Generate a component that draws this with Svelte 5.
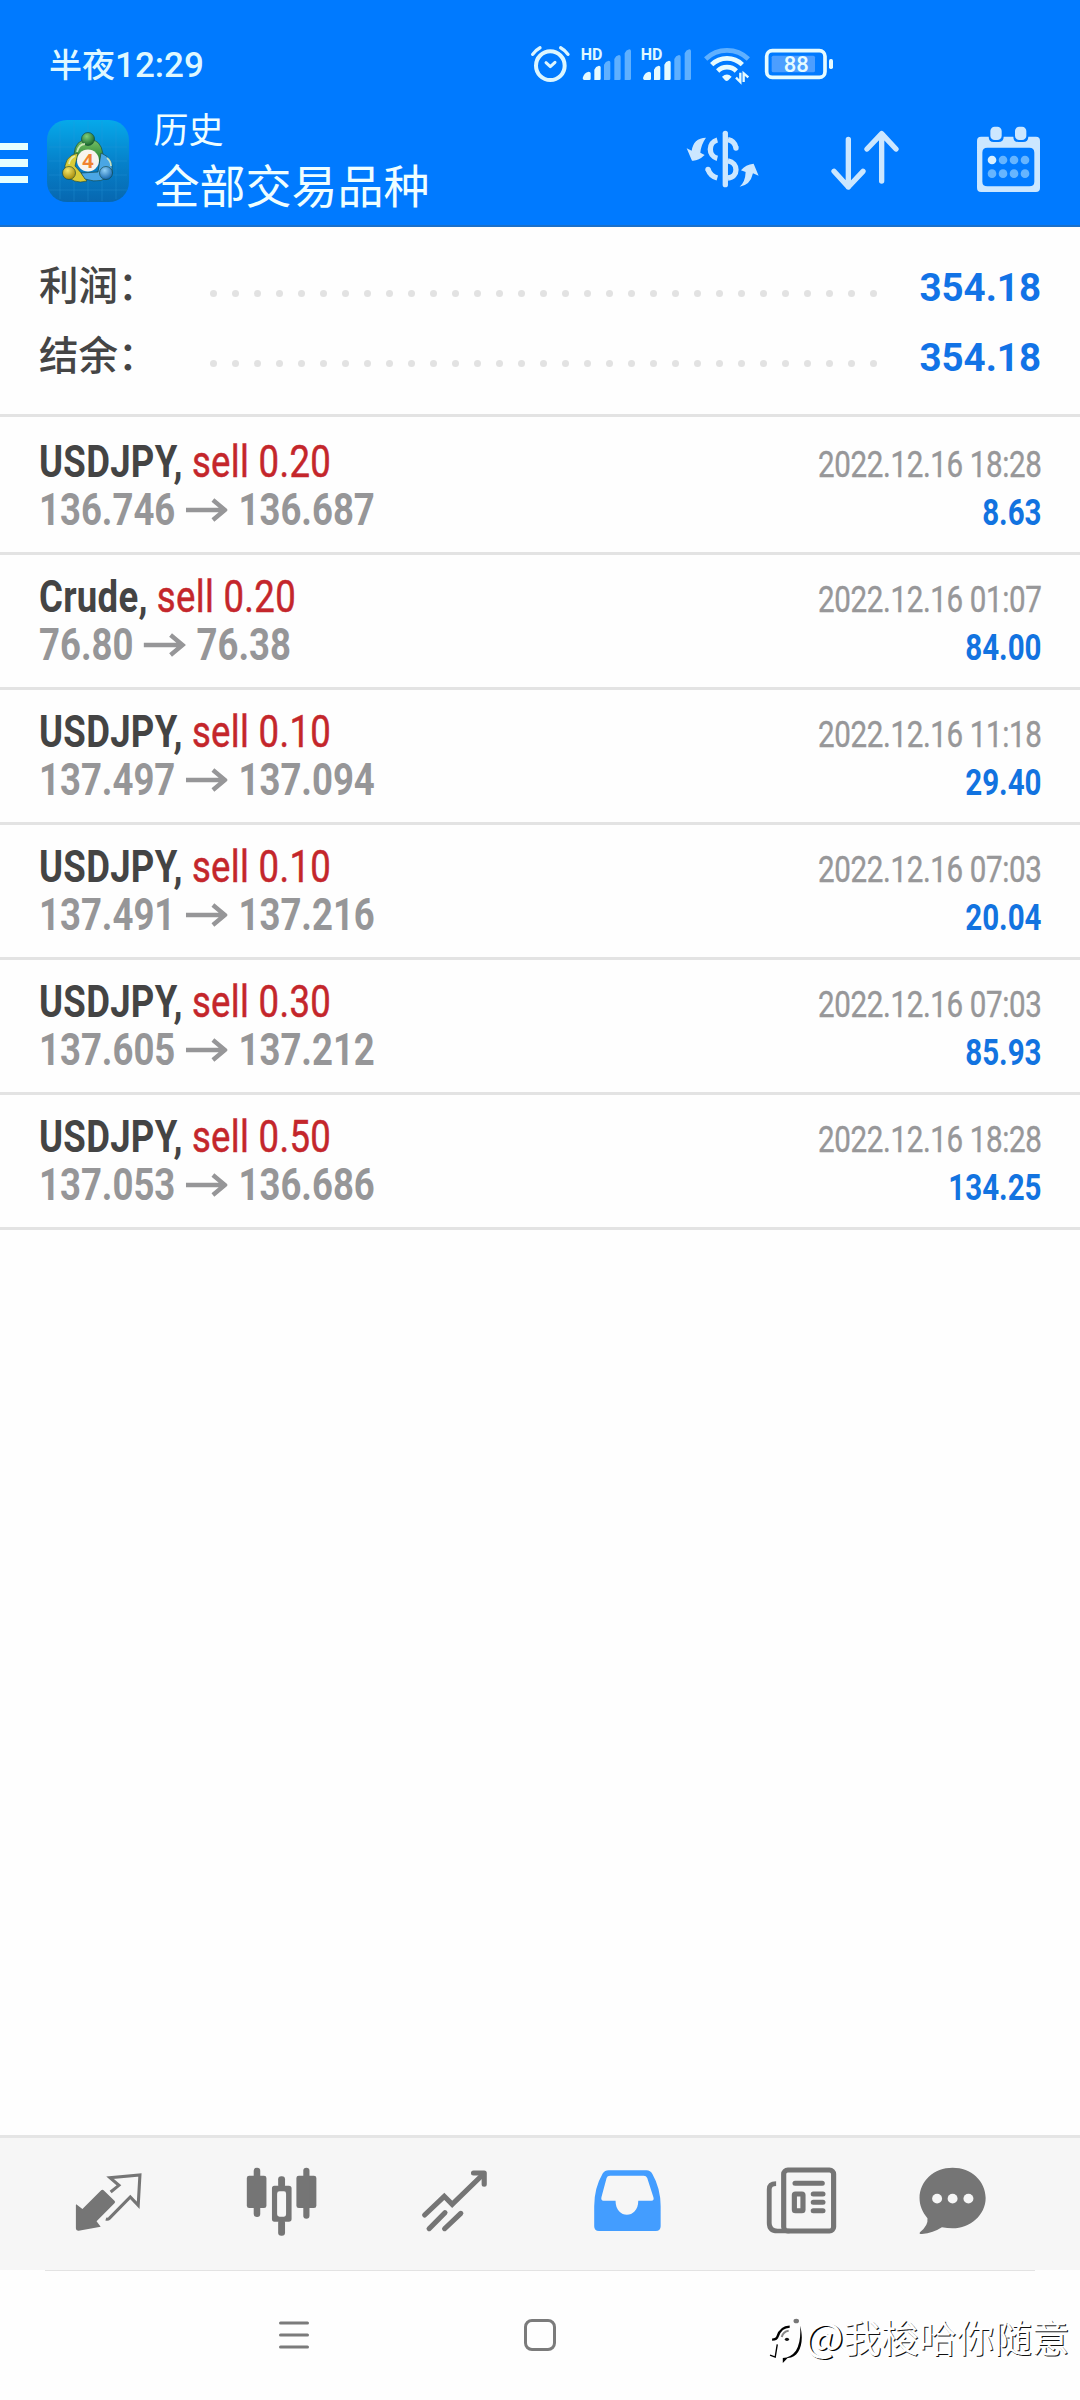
<script>
  const totals = [
    { label: '利润：', value: '354.18' },
    { label: '结余：', value: '354.18' }
  ];
  const dots = Array(31).fill(0);
  const deals = [
    { symbol: 'USDJPY', side: 'sell 0.20', open: '136.746', close: '136.687', time: '2022.12.16 18:28', profit: '8.63' },
    { symbol: 'Crude', side: 'sell 0.20', open: '76.80', close: '76.38', time: '2022.12.16 01:07', profit: '84.00' },
    { symbol: 'USDJPY', side: 'sell 0.10', open: '137.497', close: '137.094', time: '2022.12.16 11:18', profit: '29.40' },
    { symbol: 'USDJPY', side: 'sell 0.10', open: '137.491', close: '137.216', time: '2022.12.16 07:03', profit: '20.04' },
    { symbol: 'USDJPY', side: 'sell 0.30', open: '137.605', close: '137.212', time: '2022.12.16 07:03', profit: '85.93' },
    { symbol: 'USDJPY', side: 'sell 0.50', open: '137.053', close: '136.686', time: '2022.12.16 18:28', profit: '134.25' }
  ];
</script>

<div class="phone">
  <header>
    <div class="status">
      <div class="clock">半夜<span>12:29</span></div>
      <div class="status-icons">
        <svg width="50" height="45" viewBox="90 60 150 135">
          <g fill="none" stroke="#dcf6ff" stroke-linecap="round" stroke-linejoin="round">
            <circle cx="151" cy="137" r="43" stroke-width="12" />
            <path d="M138 128l13 12 14-13" stroke-width="9" />
            <path d="M98 103q9-13 22-20M204 103q-9-13-22-20" stroke-width="10" />
          </g>
        </svg>
        <svg width="60" height="45" viewBox="240 60 180 135">
          <text x="242" y="120" class="hd">HD</text>
          <path d="M252 180q-4-1-4-6 4-16 18-19 6 0 6 5v16q0 4-4 4zM283 180v-31q4-10 14-12 5 0 5 5v34q0 4-4 4z" fill="#e6fbff" />
          <path d="M312 180v-46q4-10 14-12 5 0 5 5v49q0 4-4 4zM343 180v-63q4-10 14-12 5 0 5 5v66q0 4-4 4zM374 180v-80q4-10 14-12 5 0 5 5v83q0 4-4 4z" fill="#5fb0ff" />
        </svg>
        <svg width="60" height="45" viewBox="420 60 180 135">
          <text x="422" y="120" class="hd">HD</text>
          <path d="M433 180q-4-1-4-6 4-16 18-19 6 0 6 5v16q0 4-4 4zM462 180v-31q4-10 14-12 5 0 5 5v34q0 4-4 4zM493 180v-46q4-10 14-12 5 0 5 5v49q0 4-4 4z" fill="#e6fbff" />
          <path d="M523 180v-63q4-10 14-12 5 0 5 5v66q0 4-4 4zM554 180v-80q4-10 14-12 5 0 5 5v83q0 4-4 4z" fill="#5fb0ff" />
        </svg>
        <svg width="60" height="45" viewBox="600 60 180 135">
          <g fill="none" stroke-width="14">
            <path d="M617 117a92 92 0 0 1 128 0" stroke="#5fb0ff" />
            <path d="M635 134a66 66 0 0 1 92 0M653 153a40 40 0 0 1 56 0" stroke="#e6fbff" />
          </g>
          <path d="M666 170q15-13 29 0l-10 11q-5 4-10 0z" fill="#e6fbff" />
          <path d="M721 158v28l-13-13M731 186v-26l14 12" fill="none" stroke="#e6fbff" stroke-width="7" />
        </svg>
        <svg width="80" height="45" viewBox="780 60 240 135">
          <rect x="815" y="107" width="130" height="50" rx="5" fill="#4c9eff" />
          <rect x="800" y="92" width="175" height="80" rx="17" fill="none" stroke="#e6fbff" stroke-width="11" />
          <rect x="987" y="117" width="12" height="30" rx="5" fill="#e6fbff" />
          <text x="851" y="157" class="battery">88</text>
        </svg>
      </div>
    </div>

    <div class="titlebar">
      <div class="menu"><i></i><i></i><i></i></div>
      <svg class="logo" viewBox="0 0 82 82">
        <defs>
          <linearGradient id="sky" x1="0" y1="0" x2="0" y2="1">
            <stop offset="0" stop-color="#06a9ea" /><stop offset=".5" stop-color="#0682cb" /><stop offset="1" stop-color="#0767b0" />
          </linearGradient>
          <linearGradient id="green" x1="0" y1="0" x2="0" y2="1"><stop offset="0" stop-color="#79c267" /><stop offset="1" stop-color="#1d7d2c" /></linearGradient>
          <radialGradient id="head" cx=".4" cy=".3" r=".7"><stop offset="0" stop-color="#7fce7c" /><stop offset="1" stop-color="#17672b" /></radialGradient>
          <radialGradient id="gold" cx=".4" cy=".3" r=".7"><stop offset="0" stop-color="#f4e66b" /><stop offset="1" stop-color="#a58a0a" /></radialGradient>
          <radialGradient id="blue" cx=".4" cy=".3" r=".7"><stop offset="0" stop-color="#8fd0f7" /><stop offset="1" stop-color="#1668b0" /></radialGradient>
        </defs>
        <rect width="82" height="82" rx="20" fill="url(#sky)" />
        <path d="M13 3v76M27 1v80M41 1v80M55 1v80M69 3v76M2 27h78M2 41h78M2 55h78M2 70h78" stroke="#2b9bdc" stroke-width=".7" opacity=".45" />
        <g stroke="#123f38" stroke-width=".6">
          <path d="M27 34q1-14 14-15 13 0 15 15 0 7-4 9l-9-12-12 9q-4-1-4-6z" fill="url(#green)" />
          <path d="M31 33q-15 3-13 20 8 12 22 8l-5-7-7-8z" fill="#d9cb37" />
          <path d="M54 33q13 5 11 20-9 12-27 6l-4-6 17-1z" fill="#4aa6e4" />
          <circle cx="41" cy="19" r="6.5" fill="url(#head)" />
          <circle cx="22" cy="53" r="6.5" fill="url(#gold)" />
          <circle cx="59" cy="53" r="6.5" fill="url(#blue)" />
        </g>
        <path d="M30 32q2-8 8-8M22 44q1-6 6-8M60 38q4 3 4 8" stroke="#e4f5c9" stroke-width="1.8" fill="none" opacity=".8" />
        <circle cx="41" cy="40.5" r="11" fill="#f7f4ee" />
        <text x="41" y="47.5" text-anchor="middle" class="four">4</text>
      </svg>
      <div class="titles">
        <div class="title">历史</div>
        <div class="subtitle">全部交易品种</div>
      </div>
      <div class="actions">
        <svg width="78.3" height="73.3" viewBox="130 70 235 220">
          <path d="M196 114q-19 0-30 11-10 10-13 28l-15-7 16 37q18 2 38-17l-13-7q2-24 17-45zM297 261q17-14 18-44l-14-5q14-18 38-20l15 36-17-7q-8 36-40 40z" fill="#cce7ff" />
          <path d="M254 101v154" stroke="#cce7ff" stroke-width="16" stroke-linecap="round" />
          <path d="M230 121c-28 7-28 48 0 55M202 209q7 20 28 26M262 120q20 4 24 24M262 184c32 5 32 48 0 51" fill="none" stroke="#cce7ff" stroke-width="16" />
          <circle cx="202" cy="209" r="8" fill="#cce7ff" /><circle cx="286" cy="145" r="8" fill="#cce7ff" />
        </svg>
        <svg width="70" height="73.3" viewBox="570 70 210 220">
          <path d="M625 119v143M582 215l43 47 44-47M725 244V102M681 148l44-46 43 46" fill="none" stroke="#cce7ff" stroke-width="16" stroke-linecap="round" stroke-linejoin="round" />
        </svg>
        <svg width="66.7" height="73.3" viewBox="1005 70 200 220">
          <path fill-rule="evenodd" d="M1023 111h165q12 0 12 12v142q0 12-12 12h-165q-12 0-12-12V123q0-12 12-12zM1042 144q-15 0-15 15v87q0 14 15 14h126q15 0 15-14v-87q0-15-15-15z" fill="#cce7ff" />
          <path d="M1046 104h45v7q0 16-16 16h-14q-15 0-15-16zM1120 104h45v7q0 16-16 16h-14q-15 0-15-16z" fill="#007aff" />
          <rect x="1051" y="81" width="34" height="40" rx="13" fill="#cce7ff" />
          <rect x="1125" y="81" width="34" height="40" rx="13" fill="#cce7ff" />
          <g fill="#66b5ff">
            <circle cx="1056" cy="181" r="13" fill="#d9f0ff" /><circle cx="1089" cy="181" r="13" /><circle cx="1122" cy="181" r="13" /><circle cx="1155" cy="181" r="13" />
            <circle cx="1056" cy="222" r="13" /><circle cx="1089" cy="222" r="13" /><circle cx="1122" cy="222" r="13" /><circle cx="1155" cy="222" r="13" />
          </g>
        </svg>
      </div>
    </div>
  </header>

  <section class="summary">
    {#each totals as t}
      <div class="total">
        <span class="label">{t.label}</span>
        <span class="leader">{#each dots as _}<i></i>{/each}</span>
        <span class="value">{t.value}</span>
      </div>
    {/each}
  </section>

  <main>
    {#each deals as d}
      <article>
        <div class="left">
          <div class="line name"><b>{d.symbol},</b> <span>{d.side}</span></div>
          <div class="line prices">
            <span>{d.open}</span>
            <svg viewBox="0 0 42 24" preserveAspectRatio="none"><path d="M0 12h39M27 2l12 10-12 10" fill="none" stroke="#969698" stroke-width="4.4" /></svg>
            <span>{d.close}</span>
          </div>
        </div>
        <div class="right">
          <div class="line time">{d.time}</div>
          <div class="line profit">{d.profit}</div>
        </div>
      </article>
    {/each}
  </main>

  <nav class="tabs">
    <svg viewBox="200 130 230 230" preserveAspectRatio="none">
      <path d="M221 254l18 14 53-55q5-5 10 0l30 30q4 4 0 8l-52 54 12 16-64 12q-8 1-8-7v-70z" fill="#757575" />
      <path d="M321 217l24-20-26-23 87-8-5 91-23-25-61 64q-4 4-10 2" fill="none" stroke="#757575" stroke-width="9" />
    </svg>
    <svg viewBox="701 130 230 230" preserveAspectRatio="none">
      <g fill="#757575">
        <rect x="715" y="168" width="57" height="97" rx="7" /><rect x="735" y="144" width="19" height="148" rx="9" />
        <rect x="859" y="168" width="58" height="97" rx="7" /><rect x="879" y="144" width="18" height="153" rx="9" />
        <rect x="806" y="170" width="20" height="35" rx="9" /><rect x="806" y="300" width="20" height="48" rx="9" />
        <path fill-rule="evenodd" d="M795 198h42q8 0 8 8v92q0 8-8 8h-42q-7 0-7-8v-92q0-8 7-8zM810 215q-7 0-7 7v62q0 7 7 7h13q6 0 6-7v-62q0-7-6-7z" />
      </g>
    </svg>
    <svg viewBox="1204 130 230 230" preserveAspectRatio="none">
      <g fill="none" stroke="#757575" stroke-width="15" stroke-linecap="round">
        <path d="M1232 286l57-56 23 24 90-90" />
        <path d="M1374 160h31v34" stroke-linejoin="round" />
        <path d="M1245 327l46-48M1290 327l47-46" />
      </g>
    </svg>
    <svg viewBox="140 130 230 230" preserveAspectRatio="none">
      <path fill-rule="evenodd" fill="#439dff" d="M200 152h110q11 0 17 11 24 43 24 97v60q0 14-14 14H172q-14 0-14-14v-60q0-55 25-99 6-9 17-9zM204 168q-8 0-10 7l-15 58q-2 10 6 10h35c0 56 66 56 66 0h38q9 0 6-10l-18-58q-3-7-10-7z" />
    </svg>
    <svg viewBox="643 130 230 230" preserveAspectRatio="none">
      <rect x="706" y="151" width="145" height="183" rx="12" fill="none" stroke="#757575" stroke-width="15" />
      <path d="M684 192q-20 0-20 17v101q0 24 24 24h35" fill="none" stroke="#757575" stroke-width="14" />
      <path d="M739 191h79M792 223h28M792 248h28M792 273h28" stroke="#757575" stroke-width="15" stroke-linecap="round" />
      <rect x="737" y="223" width="25" height="50" rx="3" fill="none" stroke="#757575" stroke-width="15" />
    </svg>
    <svg class="chat" viewBox="1084 130 230 230" preserveAspectRatio="none">
      <path d="M1199 144c54 0 96 40 96 91s-45 91-96 91q-15 0-31-3-25 17-58 20-11 0-5-6 24-20 21-41c-15-20-23-38-23-61 0-51 42-91 96-91z" fill="#757575" />
      <circle cx="1154" cy="237" r="14.5" fill="#f6f6f6" /><circle cx="1199" cy="237" r="14.5" fill="#f6f6f6" /><circle cx="1245" cy="237" r="14.5" fill="#f6f6f6" />
    </svg>
  </nav>

  <footer>
    <svg class="recents" viewBox="0 0 30 30"><path d="M1.5 3h27M1.5 15h27M1.5 27h27" stroke="#7b7b7b" stroke-width="3" stroke-linecap="round" /></svg>
    <div class="home"></div>
    <div class="mark">
      <svg viewBox="665 595 100 140" preserveAspectRatio="none">
        <path d="M674 660q14 0 16-10 9-28 35-29" fill="none" stroke="#000" stroke-width="7" />
        <path d="M689 674l-6 38-15-6" fill="none" stroke="#000" stroke-width="4" />
        <path d="M755 618c14 50-2 98-36 97l-14 15v-15q24-2 38-22 16-28 12-75z" fill="#000" />
        <path d="M702 652q4-17 20-19" fill="none" stroke="#888" stroke-width="6" />
        <ellipse cx="744" cy="604" rx="8" ry="7" fill="#777" />
        <ellipse cx="717" cy="659" rx="6" ry="5" fill="#111" />
      </svg>
      <span class="owner"><b>@</b>我梭哈你随意</span>
    </div>
  </footer>
</div>

<style>
  :global(body) { margin: 0; background: #fff; }
  .phone {
    width: 1080px;
    height: 2400px;
    display: flex;
    flex-direction: column;
    overflow: hidden;
    background: #fefefe;
    font-family: Roboto, 'Noto Sans CJK SC', sans-serif;
  }
  svg { display: block; flex: none; }

  header {
    box-sizing: border-box;
    height: 227px;
    padding-top: 40px;
    background: #007aff;
    border-bottom: 2px solid #1b70c9;
    color: #effeff;
    flex: none;
  }
  .status { display: flex; justify-content: space-between; height: 46px; padding: 0 240px 0 49px; }
  .clock { font: 500 33px/46px 'Noto Sans CJK SC', sans-serif; white-space: nowrap; color: #dff8ff; }
  .clock span { font-family: Roboto, sans-serif; font-size: 35px; }
  .status-icons { display: flex; }
  .hd { font: 700 48px Roboto, sans-serif; fill: #dff8ff; }
  .battery { font: 500 66px Roboto, sans-serif; fill: #e6fbff; }

  .titlebar { display: flex; align-items: flex-start; padding-right: 38px; }
  .menu { display: flex; flex-direction: column; gap: 9px; width: 27.5px; margin: 56.5px 19px 0 0; }
  .menu i { height: 7.6px; background: #e6ffff; }
  .logo { width: 82px; height: 82px; margin-top: 34px; }
  .four { font: 700 20px 'Open Sans', sans-serif; fill: #f08330; }
  .titles {
    font-family: 'Noto Sans CJK SC', sans-serif;
    padding: 23.5px 0 0 25px;
    display: flex;
    flex-direction: column;
    gap: 14.5px;
  }
  .title { font-size: 35px; line-height: 36px; }
  .subtitle { font-size: 46px; line-height: 46px; }
  .actions { display: flex; margin: 37.3px 0 0 auto; }
  .actions svg:nth-child(2) { margin: 0 75px 0 68.3px; }

  .summary { height: 162px; padding: 25px 39px 0 39px; border-bottom: 3px solid #e3e3e3; flex: none; }
  .total { display: flex; align-items: center; height: 70px; }
  .label {
    font: 500 39.5px/60px 'Noto Sans CJK SC', sans-serif;
    width: 170.5px;
    padding-bottom: 9px;
    color: #454545;
  }
  .leader { display: flex; justify-content: space-between; width: 667.5px; margin-top: 13px; }
  .leader i { width: 7px; height: 7px; border-radius: 50%; background: #e2e2e2; }
  .value { margin-left: auto; font-size: 38.5px; font-weight: 700; color: #1273e6; }

  main { flex: 1; padding-top: 3px; }
  article {
    box-sizing: border-box;
    display: flex;
    justify-content: space-between;
    height: 135px;
    padding: 0 38px 0 39px;
    border-bottom: 3px solid #e3e3e3;
  }
  .line { line-height: 48px; white-space: nowrap; }
  .left { padding-top: 17.7px; font-size: 44px; transform: scaleX(0.83); transform-origin: left; }
  .name { color: #c4262b; }
  .name b { color: #444; letter-spacing: 0.35px; }
  .name span { letter-spacing: 0.4px; -webkit-text-stroke: 0.5px #c4262b; }
  .prices { display: flex; align-items: center; color: #969698; font-weight: 700; }
  .prices svg { width: 50.6px; height: 24px; margin: 0 13px 0 12.5px; }
  .right { padding-top: 21.2px; font-size: 36px; text-align: right; transform: scaleX(0.82); transform-origin: right; }
  .time { color: #979799; letter-spacing: -0.43px; -webkit-text-stroke: 0.4px #979799; }
  .profit { color: #1273e0; font-weight: 700; }

  .tabs {
    display: flex;
    gap: 94px;
    height: 107px;
    padding: 25.3px 0 0 68.9px;
    background: #f6f6f6;
    border-top: 3px solid #e5e5e5;
    flex: none;
  }
  .tabs svg { width: 79.2px; height: 76.7px; }
  .tabs .chat { margin-left: -21.6px; }

  footer { display: flex; align-items: flex-start; height: 130px; flex: none; background: linear-gradient(#e3e3e3, #e3e3e3) 45px 0 / 990px 1px no-repeat; }
  .recents { width: 30px; height: 30px; margin: 50px 215px 0 279px; }
  .home { box-sizing: border-box; width: 32px; height: 32px; margin-top: 49px; border: 3px solid #7b7b7b; border-radius: 8px; }
  .mark { display: flex; margin: 48px 0 0 213px; }
  .mark svg { width: 34.5px; height: 46.7px; }
  .owner {
    font: 400 37.7px/46px 'Noto Sans CJK SC', sans-serif;
    margin: -6px 0 0 1px;
    color: #fff;
    text-shadow: 1px 1px 0 #111;
    white-space: nowrap;
  }
  .owner b { font-weight: 500; font-size: 40px; text-shadow: 1.5px 1px 0 #000; }
</style>
